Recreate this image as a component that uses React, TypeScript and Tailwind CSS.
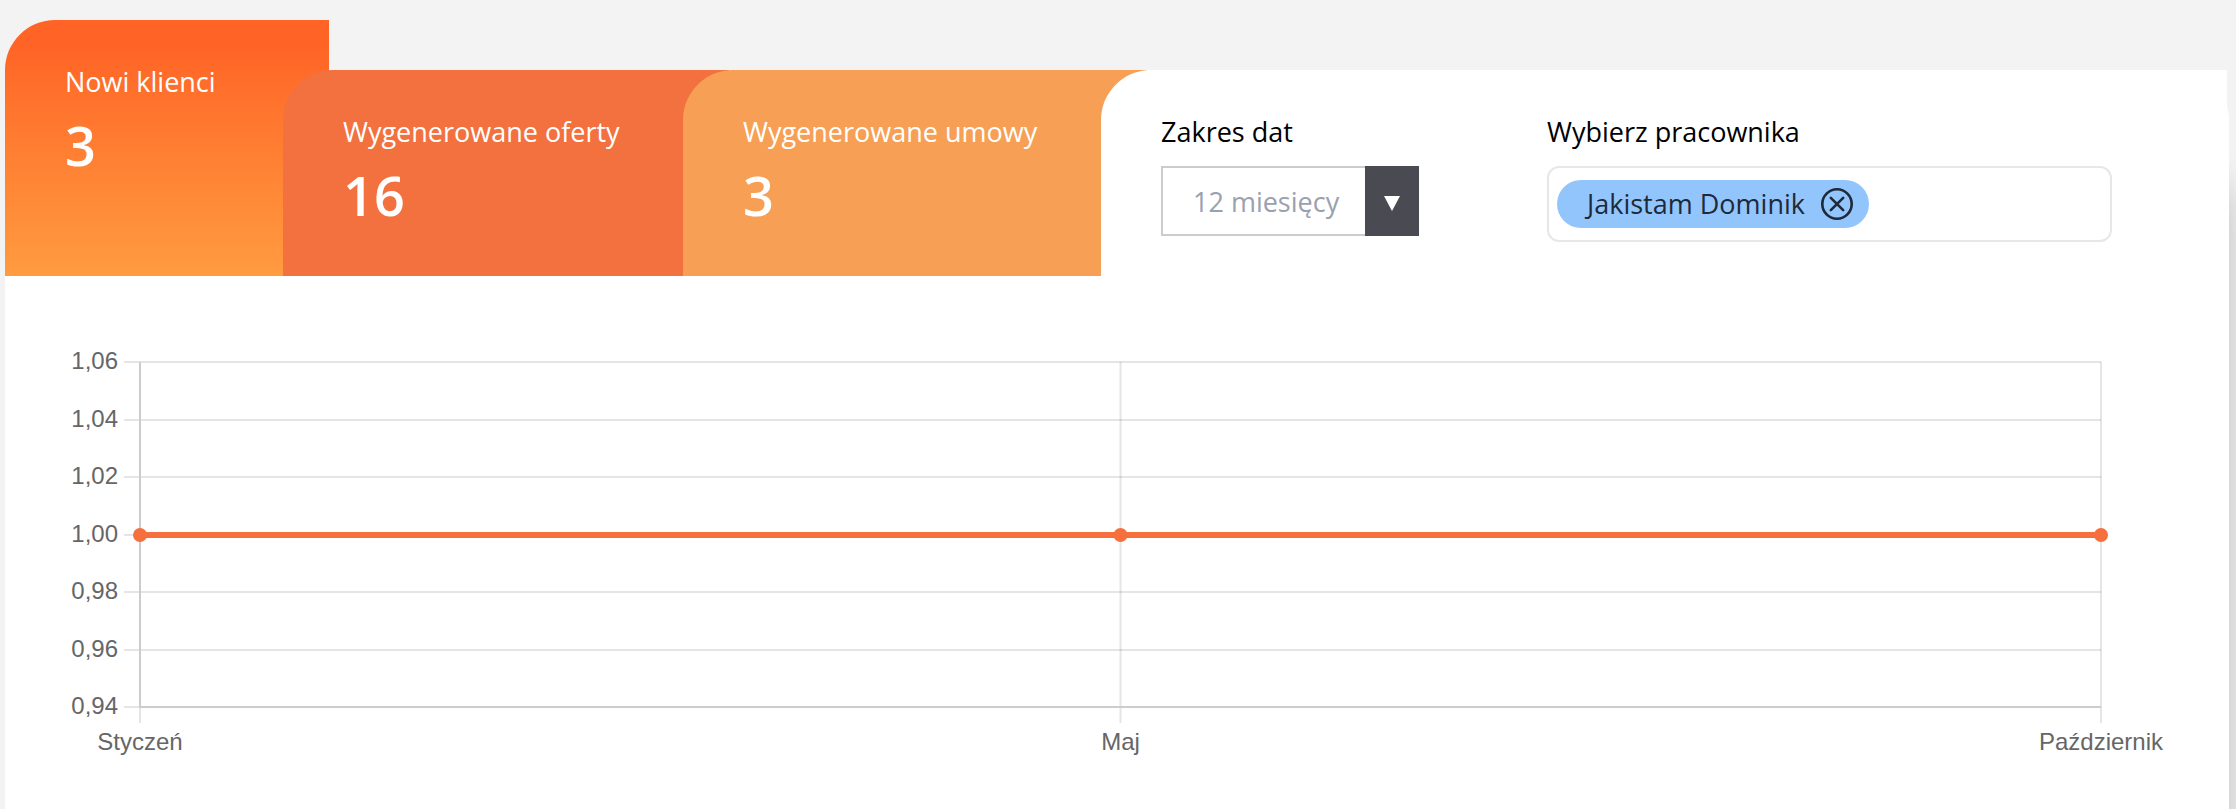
import { useState } from 'react'

interface StatTab {
  label: string
  value: number
  className: string
}

const tabs: StatTab[] = [
  {
    label: 'Nowi klienci',
    value: 3,
    className: 'h-64 w-[324px] bg-linear-to-b from-[#ff6426] from-10% to-[#ff9b40]',
  },
  {
    label: 'Wygenerowane oferty',
    value: 16,
    className: '-ml-[46px] h-[206px] w-[446px] bg-[#f3713f]',
  },
  {
    label: 'Wygenerowane umowy',
    value: 3,
    className: '-ml-[46px] h-[206px] w-[464px] bg-[#f79f55]',
  },
]

const ranges = ['12 miesięcy', '6 miesięcy', '3 miesiące']

const yTicks = [1.06, 1.04, 1.02, 1, 0.98, 0.96, 0.94]
const points = [
  { label: 'Styczeń', value: 1 },
  { label: 'Maj', value: 1 },
  { label: 'Październik', value: 1 },
]

const PLOT_HEIGHT = 345
const yMax = yTicks[0]
const yMin = yTicks[yTicks.length - 1]

const yPos = (value: number) => Math.round(((yMax - value) / (yMax - yMin)) * PLOT_HEIGHT)
const xPos = (index: number) => `${(index / (points.length - 1)) * 100}%`

function StatTabCard({ tab }: { tab: StatTab }) {
  return (
    <button
      className={`flex shrink-0 flex-col items-start rounded-tl-[50px] px-[60px] pt-11 text-left text-white ${tab.className}`}
    >
      <span className="text-[27px] leading-9 whitespace-nowrap">{tab.label}</span>
      <span className="mt-2 text-[54px] leading-[74px] font-semibold">{tab.value}</span>
    </button>
  )
}

function DateRangeSelect() {
  const [range, setRange] = useState(ranges[0])

  return (
    <div className="shrink-0">
      <label htmlFor="range" className="block text-[27px] leading-9">
        Zakres dat
      </label>
      <div className="mt-4 flex h-[70px] w-[258px]">
        <select
          id="range"
          value={range}
          onChange={(e) => setRange(e.target.value)}
          className="min-w-0 flex-1 appearance-none border-2 border-r-0 border-[#cccccc] bg-white pt-0.5 pl-[30px] text-[27px] text-gray-400"
        >
          {ranges.map((item) => (
            <option key={item}>{item}</option>
          ))}
        </select>
        <span className="flex w-[54px] items-center justify-center bg-[#4a4a52] pt-1">
          <svg viewBox="0 0 16 15" className="h-[15px] w-4 fill-white" aria-hidden="true">
            <path d="M0 0h16L8 15z" />
          </svg>
        </span>
      </div>
    </div>
  )
}

function EmployeePicker() {
  const [selected, setSelected] = useState(['Jakistam Dominik'])

  return (
    <div className="min-w-0 flex-1">
      <label htmlFor="employee" className="block text-[27px] leading-9">
        Wybierz pracownika
      </label>
      <div className="mt-4 flex h-[76px] items-center gap-2 rounded-xl border-2 border-gray-200 bg-white px-2">
        {selected.map((name) => (
          <span
            key={name}
            className="flex h-12 shrink-0 items-center gap-4 rounded-full bg-[#93c5fd] pr-4 pl-[30px] text-[27px] text-gray-800"
          >
            {name}
            <button
              aria-label={`Usuń ${name}`}
              onClick={() => setSelected(selected.filter((item) => item !== name))}
            >
              <svg
                viewBox="0 0 32 32"
                className="size-8 fill-none stroke-current"
                strokeWidth="2.6"
                strokeLinecap="round"
                aria-hidden="true"
              >
                <circle cx="16" cy="16" r="14.7" />
                <path d="m9.8 9.8 12.4 12.4M22.2 9.8 9.8 22.2" />
              </svg>
            </button>
          </span>
        ))}
        <input id="employee" className="h-full min-w-0 flex-1 outline-none" />
      </div>
    </div>
  )
}

function LineChart() {
  return (
    <div className="pt-[86px] pr-32 pb-10 pl-[135px]">
      <svg
        className="block h-[400px] w-full overflow-visible fill-[#666666] font-['Liberation_Sans',Arial,sans-serif] text-2xl"
        role="img"
        aria-label="Nowi klienci"
      >
        {yTicks.map((tick) => (
          <g key={tick}>
            <line
              x1="-16"
              x2="100%"
              y1={yPos(tick)}
              y2={yPos(tick)}
              className="stroke-black/10 stroke-2"
            />
            <text x="-22" y={yPos(tick) + 7} textAnchor="end">
              {tick.toFixed(2).replace('.', ',')}
            </text>
          </g>
        ))}
        {points.map((point, i) => (
          <g key={point.label}>
            <line
              x1={xPos(i)}
              x2={xPos(i)}
              y1="0"
              y2={PLOT_HEIGHT + 16}
              className="stroke-black/10 stroke-2"
            />
            <text x={xPos(i)} y={PLOT_HEIGHT + 43} textAnchor="middle">
              {point.label}
            </text>
          </g>
        ))}
        {/* axes */}
        <line x1="0" x2="0" y1="0" y2={PLOT_HEIGHT} className="stroke-[#cccccc] stroke-2" />
        <line
          x1="0"
          x2="100%"
          y1={PLOT_HEIGHT}
          y2={PLOT_HEIGHT}
          className="stroke-[#cccccc] stroke-2"
        />
        {points.slice(1).map((point, i) => (
          <line
            key={point.label}
            x1={xPos(i)}
            x2={xPos(i + 1)}
            y1={yPos(points[i].value)}
            y2={yPos(point.value)}
            className="stroke-[#f5703d] stroke-6"
          />
        ))}
        {points.map((point, i) => (
          <circle
            key={point.label}
            cx={xPos(i)}
            cy={yPos(point.value)}
            r="7"
            className="fill-[#f5703d]"
          />
        ))}
      </svg>
    </div>
  )
}

export default function App() {
  return (
    <main className="flex min-h-screen flex-col overflow-hidden bg-[#f3f3f3] pt-[70px] pr-[7px] pl-[5px] font-['Open_Sans','Segoe_UI',sans-serif] text-black">
      <section className="flex-1 rounded-tr-[50px] bg-white shadow-[20px_88px_40px_-24px_rgba(0,0,0,0.27)]">
        <div className="-mt-[50px] mr-0.5 flex items-end">
          {tabs.map((tab) => (
            <StatTabCard key={tab.label} tab={tab} />
          ))}
          <div className="-ml-[46px] flex h-[206px] min-w-0 flex-1 gap-32 rounded-tl-[50px] bg-white pt-11 pr-[115px] pl-[60px]">
            <DateRangeSelect />
            <EmployeePicker />
          </div>
        </div>
        <LineChart />
      </section>
    </main>
  )
}
